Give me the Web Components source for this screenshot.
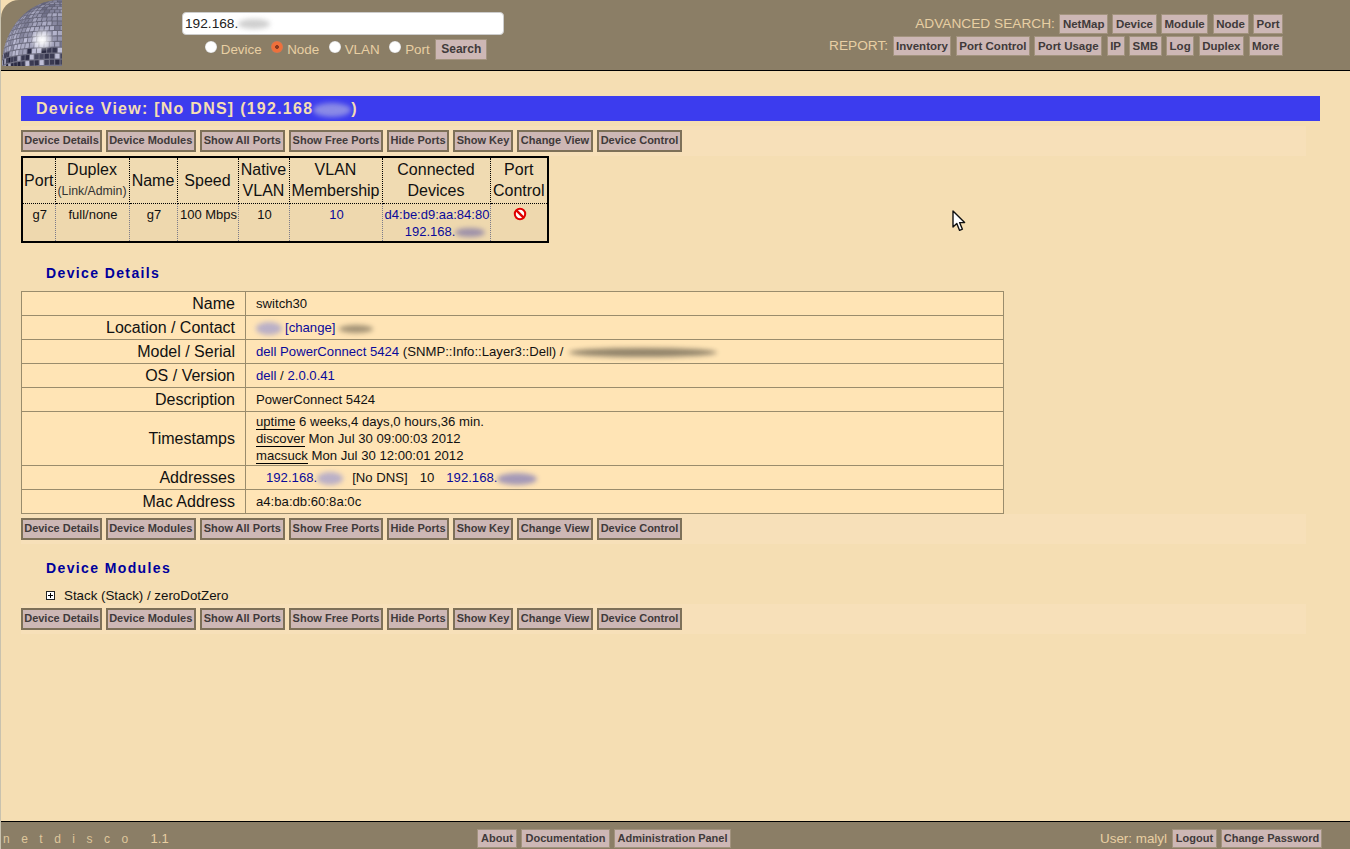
<!DOCTYPE html>
<html><head><meta charset="utf-8"><title>Netdisco</title>
<style>
html,body{margin:0;height:100%;background:#f5deb3;font-family:"Liberation Sans",Arial,sans-serif;overflow:hidden}
nd-app{height:849px}
</style></head><body>
<nd-app></nd-app>
<script>
const def=(n,html,extra={})=>{customElements.define(n,class extends HTMLElement{
 constructor(){super();this.attachShadow({mode:'open'}).innerHTML=html;}
 connectedCallback(){if(extra.init&&!this._i){this._i=1;extra.init(this)}}
})};
def('nd-btn',`<style>:host{display:inline-block;box-sizing:border-box;text-align:center;background:#cdb7b5;color:#403a3a;font:bold 11.5px/16px "Liberation Sans",sans-serif;padding:1px 2.5px;border:1px solid #a2937e;white-space:nowrap}
:host([act]){font-size:11px;line-height:14px;padding:1px 0 3px;border:2px solid #7d7058}
:host([foot]){font-size:11px;line-height:15px;padding:1px 0}
:host([big]){font-size:12px;line-height:17px;padding:1px 5px}</style><slot></slot>`);
def('nd-blur',`<style>:host{display:inline-block;vertical-align:middle;height:var(--h,9px);width:var(--w,30px);background:var(--c,#8d86b8);border-radius:50%;filter:blur(2.4px);opacity:var(--o,.8)}</style>`);
def('nd-radio',`<style>:host{display:inline-flex;align-items:center;gap:4px;color:#e8cfa3;font:13.4px/16px "Liberation Sans",sans-serif}
i{width:12px;height:12px;border-radius:50%;background:#fff;box-shadow:inset 0 0 1px #888;position:relative;top:-3px;box-sizing:border-box}
:host([on]) i{background:radial-gradient(circle,#8a3a20 0 1.6px,#f0703a 2.2px 6px);}
</style><i></i><slot></slot>`);
def('nd-ball',`<style>:host{display:block;width:60px;height:66px}svg{display:block}</style><svg width="60" height="66" viewBox="0 0 60 66"></svg>`,{init(el){
 const s=el.shadowRoot.querySelector('svg');
 let o='<defs><clipPath id="c"><rect width="60" height="66"/></clipPath><linearGradient id="b" x1="0" y1="0" x2="0" y2="1"><stop offset="0" stop-color="#5d5d70"/><stop offset=".6" stop-color="#77778a"/><stop offset=".75" stop-color="#d5d5dc"/><stop offset="1" stop-color="#b5b5c0"/></linearGradient><radialGradient id="g"><stop offset="0" stop-color="#fff"/><stop offset=".25" stop-color="#fff" stop-opacity=".85"/><stop offset="1" stop-color="#fff" stop-opacity="0"/></radialGradient></defs><g clip-path="url(#c)"><ellipse cx="58" cy="66" rx="58" ry="66" fill="url(#b)"/>';
 const cx=58,cy=66,Rx=58,Ry=66,t=-.12;let r=11;const rnd=()=>{r=(r*16807)%2147483647;return r/2147483647};
 const P=(a,b)=>{const x=Math.cos(a)*Math.sin(b),y=Math.sin(a),z=Math.cos(a)*Math.cos(b);const y2=y*Math.cos(t)-z*Math.sin(t),z2=y*Math.sin(t)+z*Math.cos(t);return [z2,cx+Rx*x,cy-Ry*y2]};
 const da=Math.PI/34;
 for(let a=-.2;a<Math.PI/2;a+=da){const n=Math.max(6,Math.round(68*Math.cos(a+da/2)));const db=2*Math.PI/n;
  for(let j=0;j<n;j++){const b=j*db-Math.PI,e=.1;const q=[P(a+da*e,b+db*e),P(a+da*(1-e),b+db*e),P(a+da*(1-e),b+db*(1-e)),P(a+da*e,b+db*(1-e))];
   if(q[0][0]<0)continue;const mx=(q[0][1]+q[2][1])/2,my=(q[0][2]+q[2][2])/2;
   if(mx>62||my>68)continue;
   let v;
   if(my>47&&mx>24){v=rnd()<.18?190:35+rnd()*40}
   else if(my>54){v=rnd()<.2?170:25+rnd()*40}
   else{const d=Math.hypot(mx-40,my-40);v=115+rnd()*55+(d<18?30:0)-(mx+my>95?10:0);if(mx<22&&my>30)v+=15;if(my<12)v-=15}
   v=Math.max(0,Math.min(250,Math.round(v)));const col=`rgb(${v},${v},${Math.min(255,v+24)})`;
   o+=`<polygon fill="${col}" points="${q.map(p=>p[1].toFixed(1)+','+p[2].toFixed(1)).join(' ')}"/>`;}}
 o+='<circle cx="40" cy="40" r="12" fill="url(#g)"/></g>';s.innerHTML=o;}});
def('nd-header',`<style>:host{display:flex;flex:none;box-sizing:border-box;height:71px;background:#8b7e66;border-bottom:1px solid #000;border-top-left-radius:18px;padding-left:1px}
.s{margin-left:120px;margin-top:12px;width:322px;display:flex;flex-direction:column;align-items:center;gap:4px}
.in{align-self:stretch;box-sizing:border-box;height:23px;background:#fff;border:1px solid #ccc;border-radius:4px;font:13.7px/21px "Liberation Sans",sans-serif;color:#222;padding-left:2px;white-space:nowrap}
.rd{display:flex;align-items:center;gap:9.5px;margin-left:6px}
.r{margin-left:auto;margin-right:67px;margin-top:14px;display:flex;flex-direction:column;align-items:flex-end;gap:2px;color:#e8cfa3;font:13.7px/20px "Liberation Sans",sans-serif}
.row{display:flex;gap:4.5px;align-items:center}
nd-btn[big]{margin-left:-4px}
</style>
<nd-ball></nd-ball>
<div class="s"><div class="in">192.168.<nd-blur style="--w:32px;--h:10px;--c:#bbb;--o:.7"></nd-blur></div>
<div class="rd"><nd-radio>Device</nd-radio><nd-radio on>Node</nd-radio><nd-radio>VLAN</nd-radio><nd-radio>Port</nd-radio><nd-btn big>Search</nd-btn></div></div>
<div class="r"><div class="row"><span>ADVANCED SEARCH:</span><nd-btn>NetMap</nd-btn><nd-btn>Device</nd-btn><nd-btn>Module</nd-btn><nd-btn>Node</nd-btn><nd-btn>Port</nd-btn></div>
<div class="row"><span>REPORT:</span><nd-btn>Inventory</nd-btn><nd-btn>Port Control</nd-btn><nd-btn>Port Usage</nd-btn><nd-btn>IP</nd-btn><nd-btn>SMB</nd-btn><nd-btn>Log</nd-btn><nd-btn>Duplex</nd-btn><nd-btn>More</nd-btn></div></div>`);
def('nd-actions',`<style>:host{display:flex;gap:4px;box-sizing:border-box;width:1285px;height:30px;padding-top:4px;background:#f7e0b9;align-items:flex-start}</style>
<nd-btn act style="width:81px">Device Details</nd-btn><nd-btn act style="width:89.5px">Device Modules</nd-btn><nd-btn act style="width:85.5px">Show All Ports</nd-btn><nd-btn act style="width:94px">Show Free Ports</nd-btn><nd-btn act style="width:62px">Hide Ports</nd-btn><nd-btn act style="width:60px">Show Key</nd-btn><nd-btn act style="width:76px">Change View</nd-btn><nd-btn act style="width:85px">Device Control</nd-btn>`);
def('nd-title',`<style>:host{display:block;padding-left:25px;color:#00009c;font:bold 14px/16px "Liberation Sans",sans-serif;letter-spacing:1.38px}</style><slot></slot>`);
def('nd-banner',`<style>:host{display:block;width:1299px;box-sizing:border-box;height:25px;background:#3c3cee;color:#f5deb3;font:bold 16px/25px "Liberation Sans",sans-serif;letter-spacing:1.25px;padding-left:15px;white-space:nowrap}</style><slot></slot>`);
def('nd-port-table',`<style>:host{display:block;width:528px;box-sizing:border-box;border:2px solid #000;background:#eed8ae}
table{border-collapse:collapse;table-layout:fixed;width:524px;font-family:"Liberation Sans",sans-serif}
th{font-weight:normal;font-size:16px;line-height:21px;height:44px;padding:0 0 1px;background:#f0dbb2;border-right:1px dotted #000;border-bottom:1px dotted #000;color:#111;white-space:nowrap}
td{font-size:13px;line-height:17px;height:35px;padding:2px 0 0 2px;vertical-align:top;text-align:center;border-right:1px dotted #7a7a8a;white-space:nowrap;color:#111}
th:last-child,td:last-child{border-right:0}
small{font-size:12.3px;line-height:22px;display:block;color:#333}
a{color:#0a0a9a}
.ip{padding-left:16px}
svg{display:block;margin:1px auto 0}
</style>
<table><colgroup><col style="width:32px"><col style="width:74px"><col style="width:48px"><col style="width:61px"><col style="width:51px"><col style="width:93px"><col style="width:108px"><col></colgroup>
<tr><th>Port</th><th>Duplex<small>(Link/Admin)</small></th><th>Name</th><th>Speed</th><th>Native<br>VLAN</th><th>VLAN<br>Membership</th><th>Connected<br>Devices</th><th>Port<br>Control</th></tr>
<tr><td>g7</td><td>full/none</td><td>g7</td><td>100 Mbps</td><td>10</td><td><a>10</a></td><td><a>d4:be:d9:aa:84:80<br><span class="ip">192.168.<nd-blur style="--w:30px;--h:9px;--c:#8a80a8"></nd-blur></span></a></td>
<td><svg width="14" height="14" viewBox="0 0 14 14"><circle cx="7" cy="7" r="5.2" fill="#fff" stroke="#e00000" stroke-width="2"/><path d="M3.2 3.2L10.8 10.8" stroke="#e00000" stroke-width="2.4"/></svg></td></tr></table>`);
def('nd-details',`<style>:host{display:block;width:983px}
table{border-collapse:collapse;table-layout:fixed;width:983px;font-family:"Liberation Sans",sans-serif;background:#ffe4b5;color:#111}
td,th{border:1px solid #9a8c6c;padding:0;height:23px}
th{font-weight:normal;font-size:16px;text-align:right;padding-right:10px;width:213px}
td{font-size:13.15px;line-height:17px;padding-left:10px;white-space:nowrap}
a{color:#0a0a9a}
u{text-decoration:none;border-bottom:1px solid #000}
</style>
<table>
<tr><th>Name</th><td>switch30</td></tr>
<tr><th>Location / Contact</th><td><nd-blur style="--w:26px;--h:13px;--c:#a9a3cc;margin-right:3px"></nd-blur><a>[change]</a> <nd-blur style="--w:34px;--h:8px;--c:#8b7e66"></nd-blur></td></tr>
<tr><th>Model / Serial</th><td><a>dell PowerConnect 5424</a> (SNMP::Info::Layer3::Dell) / <nd-blur style="--w:148px;--h:9px;--c:#8b7e66;--o:.95;margin-left:2px"></nd-blur></td></tr>
<tr><th>OS / Version</th><td><a>dell</a> / <a>2.0.0.41</a></td></tr>
<tr><th>Description</th><td>PowerConnect 5424</td></tr>
<tr><th>Timestamps</th><td style="height:53px"><u>uptime</u> 6 weeks,4 days,0 hours,36 min.<br><u>discover</u> Mon Jul 30 09:00:03 2012<br><u>macsuck</u> Mon Jul 30 12:00:01 2012</td></tr>
<tr><th>Addresses</th><td><a style="margin-left:10px">192.168.</a><nd-blur style="--w:26px;--h:13px;--c:#a9a3cc"></nd-blur><span style="margin-left:9px">[No DNS]</span><span style="margin-left:12px">10</span><a style="margin-left:12px">192.168.</a><nd-blur style="--w:40px;--h:12px;--c:#8d86b8"></nd-blur></td></tr>
<tr><th>Mac Address</th><td>a4:ba:db:60:8a:0c</td></tr>
</table>`);
def('nd-module',`<style>:host{display:flex;align-items:center;gap:9px;height:17px;padding-left:25px;font:13.33px/17px "Liberation Sans",sans-serif;color:#111}
svg{display:block}</style><svg width="9" height="9" viewBox="0 0 9 9"><rect x=".5" y=".5" width="8" height="8" fill="#fff" stroke="#222"/><path d="M2 4.5H7M4.5 2V7" stroke="#000"/></svg><slot></slot>`);
def('nd-footer',`<style>:host{display:flex;flex:none;box-sizing:border-box;height:28px;background:#8b7e66;border-top:1px solid #000;align-items:center;color:#e8cfa3;font:13px/16px "Liberation Sans",sans-serif;padding-left:2px;padding-top:6px}
.l{width:474px;flex:none;white-space:pre}.b{display:flex;gap:4px}
.l span{letter-spacing:11.5px;font-size:12px;color:#dfc79c}
.r{margin-left:auto;margin-right:28px;display:flex;gap:4px;align-items:center;font-size:13.4px}
</style><div class="l"><span>netdisco</span>   1.1</div><div class="b"><nd-btn foot style="width:40px">About</nd-btn><nd-btn foot style="width:89px">Documentation</nd-btn><nd-btn foot style="width:117px">Administration Panel</nd-btn></div>
<div class="r"><span>User: malyl</span><nd-btn foot style="width:45px;margin-left:1px">Logout</nd-btn><nd-btn foot style="width:101px">Change Password</nd-btn></div>`);
def('nd-cursor',`<style>:host{position:absolute;left:951px;top:210px;width:14px;height:22px}</style><svg width="14" height="22" viewBox="0 0 14 22"><path d="M1 1V17L4.8 13.4L7.6 20.4L10.4 19.2L7.6 12.6H12.6Z" fill="#fff" stroke="#111" stroke-width="1.4" stroke-linejoin="round"/></svg>`);
def('nd-app',`<style>:host{display:flex;flex-direction:column;position:relative;height:849px;border-left:1px solid #c9c2ae;box-sizing:border-box;background:#f5deb3}
main{flex:1;padding:25px 0 0 20px}
.a{margin-top:5px}.t1{margin-top:22px}.d{margin-top:10px}.t2{margin-top:16px}.m{margin-top:11px}</style>
<nd-header></nd-header>
<main>
<nd-banner>Device View: [No DNS] (192.168<nd-blur style="--w:38px;--h:14px;--c:#8f8fe6;--o:.95"></nd-blur>)</nd-banner>
<nd-actions class="a"></nd-actions>
<nd-port-table></nd-port-table>
<nd-title class="t1">Device Details</nd-title>
<nd-details class="d"></nd-details>
<nd-actions></nd-actions>
<nd-title class="t2">Device Modules</nd-title>
<nd-module class="m">Stack (Stack) / zeroDotZero</nd-module>
<nd-actions></nd-actions>
</main>
<nd-footer></nd-footer>
<nd-cursor></nd-cursor>`);
</script>
</body></html>
